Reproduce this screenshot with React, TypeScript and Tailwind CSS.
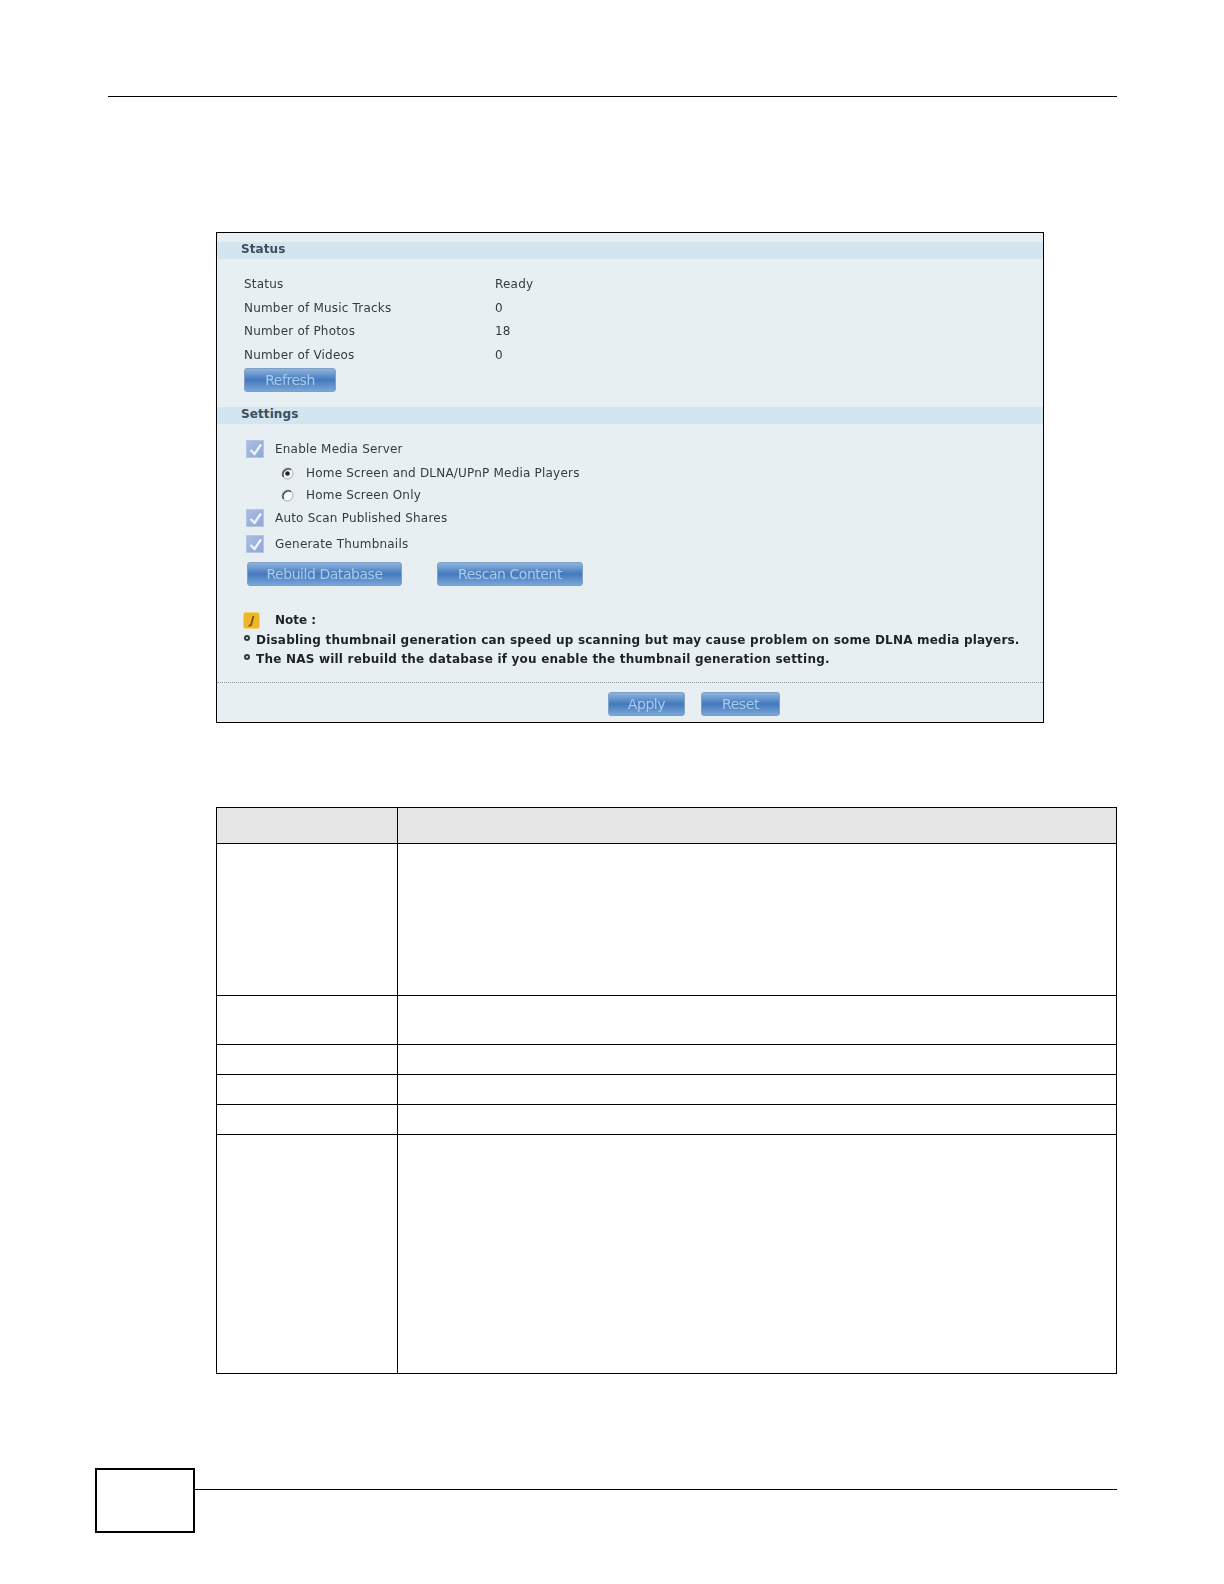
const LINE = "border-black";

function BlueButton({ label, className }: { label: string; className: string }) {
  return (
    <button className={`h-[24px] rounded-[3px] border border-[#7f9fc4] bg-linear-to-b from-[#8fb4dc] via-[#4379bd] to-[#7aa6d8] ${className}`}>
      <span className="block text-[14px] leading-[22px] text-[#a8cbe8] tracking-[-0.45px] blur-[0.4px]">{label}</span>
    </button>
  );
}

function CheckBox() {
  return (
    <span className="w-[18px] h-[18px] shrink-0 bg-linear-to-br from-[#a9bde2] to-[#8ea8d6] border border-[#b4c4e2] flex items-center justify-center">
      <svg width="15" height="15" viewBox="0 0 15 15">
        <path d="M2.5 8 L6.5 12 L13 2.5" fill="none" stroke="#eef3fa" strokeWidth="2.4" />
      </svg>
    </span>
  );
}

function Radio({ on }: { on?: boolean }) {
  return (
    <svg width="13" height="13" viewBox="0 0 13 13" className="shrink-0">
      <circle cx="6.5" cy="6.5" r="5.5" fill="#f6f8fa" stroke="#a4a9ad" strokeWidth="1" />
      <path d="M2.6 10 A5.5 5.5 0 0 1 10 2.6" fill="none" stroke="#3a3f44" strokeWidth="1.4" />
      {on && <circle cx="6.5" cy="6.5" r="2.3" fill="#23272b" />}
    </svg>
  );
}

function PanelHeader({ title }: { title: string }) {
  return (
    <div className="h-[17px] bg-[#d3e5ee] pl-[24px] text-[12px] leading-[15px] font-bold text-[#3c4d5c] tracking-[0.1px]">
      {title}
    </div>
  );
}

const STATUS_ROWS = [
  ["Status", "Ready"],
  ["Number of Music Tracks", "0"],
  ["Number of Photos", "18"],
  ["Number of Videos", "0"],
];

function Panel() {
  return (
    <div className="w-[828px] h-[491px] ml-[216px] border border-black bg-[#e8eff3] text-[#333b42] text-[12px] tracking-[0.2px] flex flex-col" style={{ fontFamily: '"DejaVu Sans", sans-serif' }}>
      <div className="mt-[9px] blur-[0.3px]">
        <PanelHeader title="Status" />
        <div className="pl-[27px] pt-[14px]">
          {STATUS_ROWS.map(([name, value]) => (
            <div key={name} className="flex h-[23.5px] leading-[23px]">
              <span className="w-[251px]">{name}</span>
              <span>{value}</span>
            </div>
          ))}
          <BlueButton label="Refresh" className="w-[92px] mt-[1px] block" />
        </div>
      </div>
      <div className="mt-[15px] blur-[0.3px]">
        <PanelHeader title="Settings" />
        <div className="pl-[29px] pt-[16px]">
          <div className="flex items-center h-[18px]">
            <CheckBox />
            <span className="ml-[11px]">Enable Media Server</span>
          </div>
          <div className="flex items-center h-[18px] mt-[6px] pl-[35px]">
            <Radio on />
            <span className="ml-[12px]">Home Screen and DLNA/UPnP Media Players</span>
          </div>
          <div className="flex items-center h-[18px] mt-[4px] pl-[35px]">
            <Radio />
            <span className="ml-[12px]">Home Screen Only</span>
          </div>
          <div className="flex items-center h-[18px] mt-[5px]">
            <CheckBox />
            <span className="ml-[11px]">Auto Scan Published Shares</span>
          </div>
          <div className="flex items-center h-[18px] mt-[8px]">
            <CheckBox />
            <span className="ml-[11px]">Generate Thumbnails</span>
          </div>
          <div className="flex gap-[35px] mt-[9px] pl-[1px]">
            <BlueButton label="Rebuild Database" className="w-[155px]" />
            <BlueButton label="Rescan Content" className="w-[146px]" />
          </div>
        </div>
        <div className="pl-[26px] pt-[25px] font-bold text-[#1d2227] text-[12px] tracking-normal">
          <div className="flex items-center h-[18px]">
            <svg width="17" height="17" viewBox="0 0 17 17" className="shrink-0">
              <rect x="0.5" y="0.5" width="16" height="16" rx="2" fill="#eeb62c" stroke="#f3d56a" />
              <path d="M10.5 4 L8 13 L5.5 14" fill="none" stroke="#7a5410" strokeWidth="1.8" />
            </svg>
            <span className="ml-[15px]">Note :</span>
          </div>
          <div className="mt-[1px]">
            {[
              "Disabling thumbnail generation can speed up scanning but may cause problem on some DLNA media players.",
              "The NAS will rebuild the database if you enable the thumbnail generation setting.",
            ].map((note) => (
              <div key={note} className="flex items-center h-[19px] tracking-[0.21px]">
                <span className="w-[6px] h-[6px] rounded-full border-[2px] border-[#333b42] mr-[6px] mb-[3px] ml-[1px] shrink-0" />
                <span className="whitespace-nowrap">{note}</span>
              </div>
            ))}
          </div>
        </div>
      </div>
      <div className="mt-[14px] border-t border-dotted border-[#8d9397]" />
      <div className="flex pl-[391px] gap-[16px] pt-[9px]">
        <BlueButton label="Apply" className="w-[77px]" />
        <BlueButton label="Reset" className="w-[79px]" />
      </div>
    </div>
  );
}

const TABLE_ROWS = [152, 49, 30, 30, 30, 239];

function SpecTable() {
  return (
    <div className={`w-[901px] ml-[216px] mt-[84px] border-l border-t border-r ${LINE}`}>
      <div className={`flex h-[36px] bg-[#e6e6e6] border-b ${LINE}`}>
        <div className={`w-[181px] border-r ${LINE}`} />
      </div>
      {TABLE_ROWS.map((height, i) => (
        <div key={i} className={`flex border-b ${LINE}`} style={{ height }}>
          <div className={`w-[181px] border-r ${LINE}`} />
        </div>
      ))}
    </div>
  );
}

export default function App() {
  return (
    <div className="w-[1224px] h-[1584px] bg-white flex flex-col">
      <div className="h-[97px] ml-[108px] w-[1009px] border-b border-black" />
      <div className="h-[135px]" />
      <Panel />
      <SpecTable />
      <div className="flex mt-[94px] ml-[95px]">
        <div className={`w-[100px] h-[65px] border-2 ${LINE}`} />
        <div className="w-[922px] h-[22px] border-b border-black" />
      </div>
    </div>
  );
}
